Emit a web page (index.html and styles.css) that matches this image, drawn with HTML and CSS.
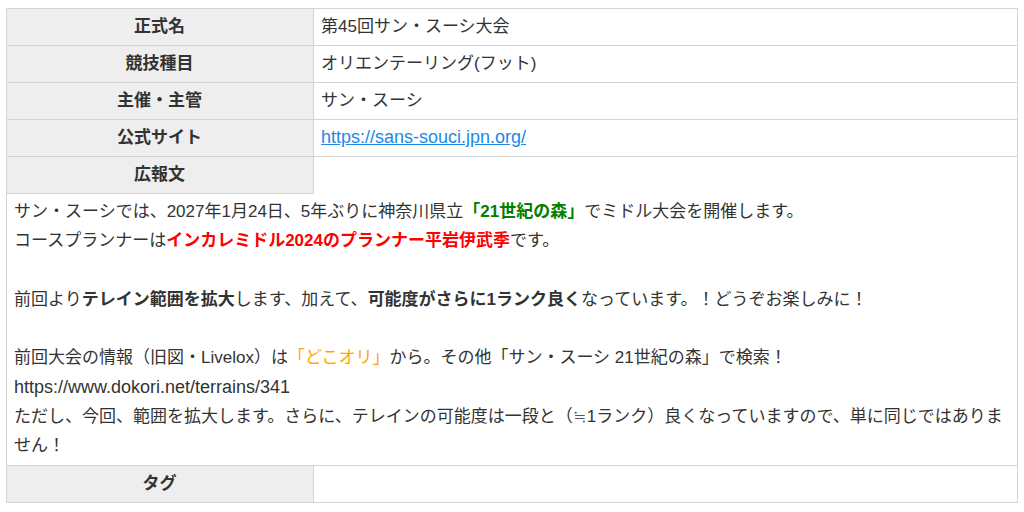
FILE: index.html
```html
<!DOCTYPE html>
<html lang="ja">
<head>
	<meta charset="UTF-8">
	<meta name="viewport" content="width=device-width, initial-scale=1.0">
	<title>大会情報</title>
	<link rel="stylesheet" href="styles.css">
</head>
<body>
	<table class="info">
		<tr>
			<th>正式名</th>
			<td>第45回サン・スーシ大会</td>
		</tr>
		<tr>
			<th>競技種目</th>
			<td>オリエンテーリング(フット)</td>
		</tr>
		<tr>
			<th>主催・主管</th>
			<td>サン・スーシ</td>
		</tr>
		<tr>
			<th>公式サイト</th>
			<td><a href="#" class="url">https://sans-souci.jpn.org/</a></td>
		</tr>
		<tr>
			<th>広報文</th>
			<td class="blank"></td>
		</tr>
		<tr>
			<td colspan="2" class="notice">
				サン・スーシでは、2027年1月24日、5年ぶりに神奈川県立<b class="green">「21世紀の森」</b>でミドル大会を開催します。<br>
				コースプランナーは<b class="red">インカレミドル2024のプランナー平岩伊武季</b>です。<br>
				<br>
				前回より<b>テレイン範囲を拡大</b>します、加えて、<b>可能度がさらに1ランク良く</b>なっています。！どうぞお楽しみに！<br>
				<br>
				前回大会の情報（旧図・Livelox）は<span class="orange">「どこオリ」</span>から。その他「サン・スーシ 21世紀の森」で検索！<br>
				<span class="url">https://www.dokori.net/terrains/341</span><br>
				ただし、今回、範囲を拡大します。さらに、テレインの可能度は一段と（≒1ランク）良くなっていますので、単に同じではありません！
			</td>
		</tr>
		<tr>
			<th>タグ</th>
			<td></td>
		</tr>
	</table>
</body>
</html>
```

FILE: styles.css
```css
body {
	margin:8px 6px;
	font-family:"Liberation Sans", "Noto Sans CJK JP", sans-serif;
	font-size:17px;
	color:#333;
}

.info {
	border-collapse:collapse;
	width:1012px;
}
th,td {
	border:1px solid #d4d4d4;
	padding:4px 8px 4px 7px;
	line-height:28px;
	text-align:left;
}
th {
	width:291px;
	background-color:#eeeeee;
	text-align:center;
	font-weight:bold;
}
td a {
	color:#1e88e5;
}
.url {
	font-size:18px;
	line-height:1;
}
.blank {
	border-bottom:none;
}
.notice {
	border-top:none;
	line-height:29.25px;
	padding:3px 8px 5px 7px;
}
.green {
	color:#008000;
}
.red {
	color:#ff0000;
}
.orange {
	color:#ffa500;
}
```
